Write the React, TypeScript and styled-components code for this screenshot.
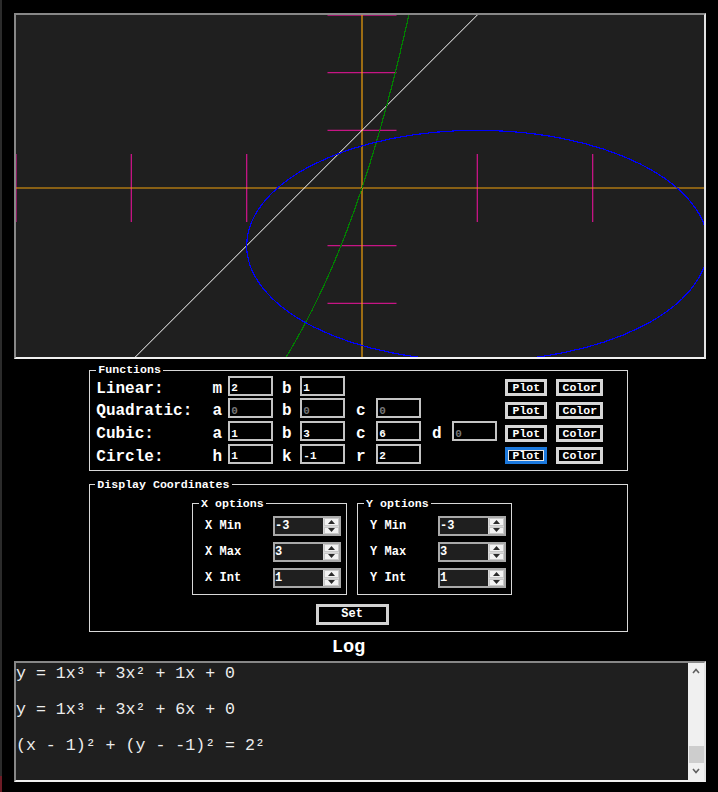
import * as React from 'react';
import styled, { createGlobalStyle } from 'styled-components';

const GlobalStyle = createGlobalStyle`
  html, body {
    margin: 0;
    padding: 0;
    background: #000;
  }
  body {
    font-family: "Liberation Mono", "Courier New", monospace;
    color: #fff;
  }
`;

const Page = styled.div`
  width: 716px;
  min-height: 792px;
  box-sizing: border-box;
  padding-top: 13px;
  border-left: 2px solid #2b2b2b;
  border-image: linear-gradient(to bottom, #2b2b2b 97.8%, #6e1c26 97.8%) 1;
`;

const CanvasFrame = styled.div`
  width: 692px;
  height: 346px;
  margin-left: 12px;
  box-sizing: border-box;
  border: 2px solid;
  border-color: #878787 #e2e2e2 #f0f0f0 #878787;
  background: #1f1f1f;
  overflow: hidden;
  svg {
    display: block;
  }
`;

const Group = styled.fieldset`
  margin: 0;
  min-width: 0;
  box-sizing: border-box;
  border: 1px solid #d8d8d8;
`;

const Legend = styled.legend`
  padding: 0 2px;
  font-size: 11.6px;
  font-weight: bold;
  line-height: 13.3px;
  color: #fff;
`;

const FunctionsGroup = styled(Group)`
  width: 539px;
  margin: 4.4px 0 0 87.3px;
  padding: 0 6px 6.5px 6px;
`;

const FuncGrid = styled.div`
  display: grid;
  grid-template-columns: 110px 22px 45px 27px 45px 31px 45px 31px 45px 8px 42px 9px 47px;
  grid-auto-rows: 20px;
  row-gap: 2.7px;
  align-items: center;
  margin-top: -1px;
`;

const RowLabel = styled.span`
  align-self: start;
  font-size: 16px;
  font-weight: bold;
  line-height: 26px;
  white-space: pre;
`;

const Letter = styled(RowLabel)`
  text-align: center;
`;

const ParamInput = styled.input`
  width: 45px;
  height: 20px;
  box-sizing: border-box;
  margin: 0;
  border: 2px solid #c4c4c4;
  background: #000;
  color: #fff;
  font: bold 11px "Liberation Mono", monospace;
  padding: 5px 1px 0;
  outline: none;
  &::placeholder {
    color: #767676;
  }
`;

const SmallButton = styled.button<{ $focused?: boolean }>`
  height: 17px;
  margin: 0;
  padding: 0;
  box-sizing: border-box;
  background: #000;
  color: #fff;
  font: bold 11.5px "Liberation Mono", monospace;
  line-height: 11px;
  border: 3px solid ${(p) => (p.$focused ? '#1b78dc' : '#d6d6d6')};
  box-shadow: ${(p) => (p.$focused ? 'inset 0 0 0 1px #e6e6e6' : 'none')};
  align-self: end;
  margin-bottom: -0.5px;
`;

const DisplayGroup = styled(Group)`
  width: 539px;
  margin: 6.35px 0 0 87.3px;
  padding: 6.35px 18.4px 6.3px 5px;
`;

const OptionsRow = styled.div`
  display: flex;
  justify-content: center;
  gap: 10px;
`;

const OptionsGroup = styled(Group)`
  width: 155px;
  padding: 0 5px 6.2px 6px;
`;

const OptionsGrid = styled.div`
  display: grid;
  grid-template-columns: 68px 68px;
  grid-auto-rows: 20px;
  row-gap: 6px;
  align-items: center;
  margin: 5.65px 0 0 6px;
`;

const OptionLabel = styled.span`
  font-size: 12px;
  font-weight: bold;
  white-space: pre;
`;

const NumBox = styled.div`
  display: flex;
  width: 68px;
  height: 20px;
  box-sizing: border-box;
  border: 2px solid #a9a9a9;
  background: #1f1f1f;
`;

const NumInput = styled.input`
  flex: 1;
  min-width: 0;
  margin: 0;
  border: 0;
  padding: 0;
  background: transparent;
  color: #fff;
  font: bold 12px "Liberation Mono", monospace;
  outline: none;
`;

const Spinner = styled.div`
  width: 15px;
  display: flex;
  flex-direction: column;
  gap: 1px;
  background: #d9d9d9;
  padding: 0 0 0 1px;
`;

const SpinButton = styled.div`
  flex: 1;
  display: flex;
  align-items: center;
  justify-content: center;
  background: #f3f3f3;
  border: 1px solid #c9c9c9;
`;

const SetButton = styled.button`
  display: block;
  width: 73px;
  height: 20.4px;
  margin: 8.8px auto 0;
  padding: 0;
  box-sizing: border-box;
  background: #000;
  color: #fff;
  border: 3px solid #d2d2d2;
  font: bold 12px "Liberation Mono", monospace;
`;

const LogTitle = styled.h3`
  margin: 0;
  height: 29px;
  padding-right: 21px;
  font-size: 18.72px;
  font-weight: bold;
  line-height: 30px;
  text-align: center;
`;

const LogBox = styled.div`
  display: flex;
  width: 692px;
  height: 121px;
  margin-left: 12px;
  box-sizing: border-box;
  border: 2px solid;
  border-color: #878787 #e2e2e2 #f0f0f0 #878787;
  background: #1f1f1f;
`;

const LogLines = styled.div`
  flex: 1;
  overflow: hidden;
  display: flex;
  flex-direction: column;
  justify-content: flex-end;
  padding-bottom: 9px;
`;

const LogEntry = styled.div`
  flex-shrink: 0;
  height: 36px;
  font-size: 16.6px;
  line-height: 21px;
  color: #ededed;
  white-space: pre;
`;

const ScrollBar = styled.div`
  width: 16px;
  display: flex;
  flex-direction: column;
  background: #f0f0f0;
`;

const ScrollArrow = styled.div`
  height: 17px;
  display: flex;
  align-items: center;
  justify-content: center;
`;

const ScrollTrack = styled.div`
  flex: 1;
  display: flex;
  flex-direction: column;
  justify-content: flex-end;
`;

const ScrollThumb = styled.div`
  height: 17px;
  margin-left: 1px;
  background: #cdcdcd;
`;

// graph scale: -3..3 on both axes
const UX = 115.333;
const UY = 57.667;
const gx = (x: number) => (x + 3) * UX;
const gy = (y: number) => (3 - y) * UY;

function Graph() {
  const ox = gx(0);
  const oy = gy(0);
  const cubic: string[] = [];
  for (let x = -3; x <= 3.001; x += 0.01) {
    const y = x * x * x + 3 * x * x + 6 * x;
    cubic.push(`${gx(x).toFixed(2)},${gy(y).toFixed(2)}`);
  }
  return (
    <svg width={688} height={342} viewBox="0 0 688 342">
      {[-3, -2, -1, 1, 2].map((k) => (
        <line key={'x' + k} x1={gx(k)} x2={gx(k)} y1={oy - 34} y2={oy + 34} stroke="#c71585" strokeWidth={1.3} />
      ))}
      {[3, 2, 1, -1, -2].map((k) => (
        <line key={'y' + k} x1={ox - 34.5} x2={ox + 34.5} y1={gy(k)} y2={gy(k)} stroke="#c71585" strokeWidth={1.3} />
      ))}
      <line x1={0} x2={688} y1={oy} y2={oy} stroke="#f2a20c" strokeWidth={1.2} />
      <line x1={ox} x2={ox} y1={0} y2={342} stroke="#f2a20c" strokeWidth={1.2} />
      <line x1={gx(-3)} y1={gy(-5)} x2={gx(3)} y2={gy(7)} stroke="#ffffff" strokeWidth={1} />
      <g shapeRendering="crispEdges" fill="none">
        <polyline points={cubic.join(' ')} stroke="#008000" strokeWidth={1.2} />
        <ellipse cx={gx(1)} cy={gy(-1)} rx={2 * UX} ry={2 * UY} stroke="#0000ff" strokeWidth={1.2} />
      </g>
    </svg>
  );
}

type Param = { letter: string; value?: string } | null;

const rows: { label: string; params: Param[]; focused?: boolean }[] = [
  { label: 'Linear:', params: [{ letter: 'm', value: '2' }, { letter: 'b', value: '1' }, null, null] },
  { label: 'Quadratic:', params: [{ letter: 'a' }, { letter: 'b' }, { letter: 'c' }, null] },
  {
    label: 'Cubic:',
    params: [{ letter: 'a', value: '1' }, { letter: 'b', value: '3' }, { letter: 'c', value: '6' }, { letter: 'd' }],
  },
  {
    label: 'Circle:',
    params: [{ letter: 'h', value: '1' }, { letter: 'k', value: '-1' }, { letter: 'r', value: '2' }, null],
    focused: true,
  },
];

function Spin() {
  return (
    <Spinner>
      <SpinButton>
        <svg width="7" height="4" viewBox="0 0 7 4"><polygon points="0,4 3.5,0 7,4" fill="#2a2a2a" /></svg>
      </SpinButton>
      <SpinButton>
        <svg width="7" height="4" viewBox="0 0 7 4"><polygon points="0,0 3.5,4 7,0" fill="#2a2a2a" /></svg>
      </SpinButton>
    </Spinner>
  );
}

function AxisOptions({ axis }: { axis: string }) {
  const fields = [
    ['Min', '-3'],
    ['Max', '3'],
    ['Int', '1'],
  ];
  return (
    <OptionsGroup>
      <Legend>{axis} options</Legend>
      <OptionsGrid>
        {fields.map(([name, val]) => (
          <React.Fragment key={name}>
            <OptionLabel>{`${axis} ${name}`}</OptionLabel>
            <NumBox>
              <NumInput defaultValue={val} />
              <Spin />
            </NumBox>
          </React.Fragment>
        ))}
      </OptionsGrid>
    </OptionsGroup>
  );
}

// only the tail of the log is in view (scrolled to the bottom)
const logItems = ['y = 1x³ + 3x² + 1x + 0', 'y = 1x³ + 3x² + 6x + 0', '(x - 1)² + (y - -1)² = 2²'];

export default function App() {
  return (
    <Page>
      <GlobalStyle />
      <CanvasFrame>
        <Graph />
      </CanvasFrame>

      <FunctionsGroup>
        <Legend>Functions</Legend>
        <FuncGrid>
          {rows.map((row) => (
            <React.Fragment key={row.label}>
              <RowLabel>{row.label}</RowLabel>
              {row.params.map((p, i) =>
                p ? (
                  <React.Fragment key={i}>
                    <Letter>{p.letter}</Letter>
                    <ParamInput defaultValue={p.value} placeholder="0" />
                  </React.Fragment>
                ) : (
                  <React.Fragment key={i}>
                    <span />
                    <span />
                  </React.Fragment>
                )
              )}
              <span />
              <SmallButton $focused={row.focused}>Plot</SmallButton>
              <span />
              <SmallButton>Color</SmallButton>
            </React.Fragment>
          ))}
        </FuncGrid>
      </FunctionsGroup>

      <DisplayGroup>
        <Legend>Display Coordinates</Legend>
        <OptionsRow>
          <AxisOptions axis="X" />
          <AxisOptions axis="Y" />
        </OptionsRow>
        <SetButton>Set</SetButton>
      </DisplayGroup>

      <LogTitle>Log</LogTitle>
      <LogBox>
        <LogLines>
          {logItems.map((t, i) => (
            <LogEntry key={i}>{t}</LogEntry>
          ))}
        </LogLines>
        <ScrollBar>
          <ScrollArrow>
            <svg width="8" height="6" viewBox="0 0 8 6"><polyline points="1,5 4,1.5 7,5" fill="none" stroke="#606060" strokeWidth="1.6" /></svg>
          </ScrollArrow>
          <ScrollTrack>
            <ScrollThumb />
          </ScrollTrack>
          <ScrollArrow>
            <svg width="8" height="6" viewBox="0 0 8 6"><polyline points="1,1 4,4.5 7,1" fill="none" stroke="#606060" strokeWidth="1.6" /></svg>
          </ScrollArrow>
        </ScrollBar>
      </LogBox>
    </Page>
  );
}
